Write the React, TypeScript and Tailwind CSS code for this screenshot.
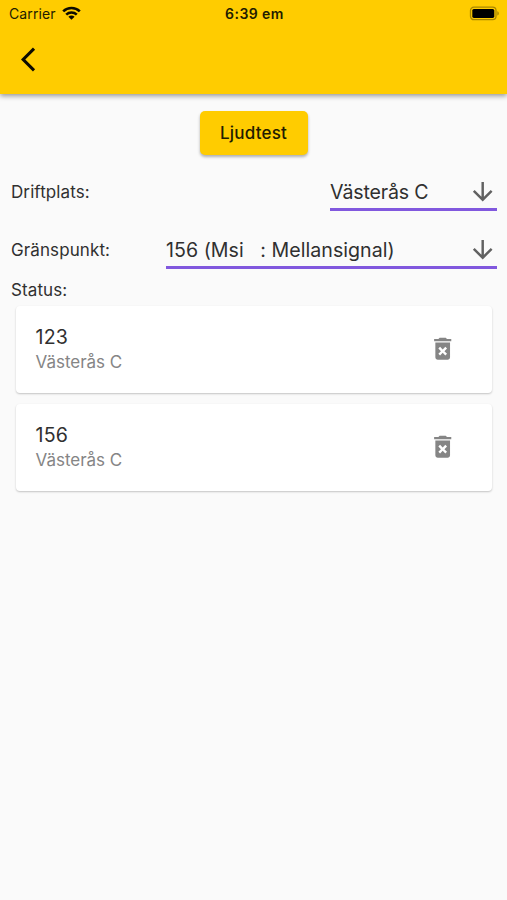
import React from 'react';
import { MdArrowDownward, MdDeleteForever } from 'react-icons/md';

type SelectType = {
  label: string;
  value: string;
  className: string;
};

const StatusBar = () => {
  return (
    <div className="grid grid-cols-3 items-center h-[27px] pl-[9px] pr-[7px] text-[14px] text-[#221c00]">
      <div className="flex items-center gap-[6px]">
        <span className="tracking-[0.1px]">Carrier</span>
        <svg
          className="-mt-[2px]"
          width="19"
          height="14"
          viewBox="0 0 19 14"
          fill="none"
        >
          <path
            d="M1.2 5.4C5.8 .9 13.2 .9 17.8 5.4M4.2 8.6c3-2.8 7.6-2.8 10.6 0"
            stroke="#0d0b00"
            strokeWidth="2.6"
          />
          <path d="M9.5 13.8L6.4 10.8c1.8-1.6 4.4-1.6 6.2 0z" fill="#0d0b00" />
        </svg>
      </div>
      <span className="text-center font-semibold tracking-[0.45px]">
        6:39 em
      </span>
      <svg
        className="justify-self-end"
        width="31"
        height="15"
        viewBox="0 0 31 15"
      >
        <rect
          x="1.5"
          y="1.1"
          width="25.5"
          height="12.6"
          rx="3.4"
          fill="none"
          stroke="#a98700"
          strokeWidth="1.3"
        />
        <rect x="3.3" y="2.9" width="22" height="9" rx="1.6" fill="#000" />
        <path d="M28.3 5.2c2 .6 2 3.8 0 4.4z" fill="#a98700" />
      </svg>
    </div>
  );
};

const Select = ({ label, value, className }: SelectType) => {
  return (
    <div className="flex items-center justify-between h-[58.6px] pl-[11px] pr-[10px]">
      <span className="pt-[2px] text-[17px] tracking-[0.1px]">{label}</span>
      <button
        className={`flex items-center justify-between h-[39px] pt-[3px] border-b-[3px] border-[#8158de] text-[19.6px] ${className}`}
      >
        <span className="pt-[2px] whitespace-pre">{value}</span>
        <MdArrowDownward className="size-[29.4px] text-[#616161]" />
      </button>
    </div>
  );
};

const Card = ({ title, place }: { title: string; place: string }) => {
  return (
    <li className="flex items-center justify-between h-[87px] pl-[20px] pr-[34px] rounded-[4px] bg-white shadow-[0_1px_2px_rgba(0,0,0,0.22)]">
      <div>
        <h2 className="text-[19.6px] leading-[26px] tracking-[0.2px]">
          {title}
        </h2>
        <p className="text-[17px] leading-[25px] tracking-[-0.05px] text-[#858585]">
          {place}
        </p>
      </div>
      <MdDeleteForever className="size-[29.4px] -mt-[2px] text-[#858585]" />
    </li>
  );
};

const App = () => {
  return (
    <div className="min-h-screen bg-[#fafafa] text-[#303030] font-[Inter,sans-serif]">
      <header className="h-[94px] bg-[#ffcc00] shadow-[0_2px_5px_rgba(0,0,0,0.4)]">
        <StatusBar />
        <button className="block pl-[20.5px] pt-[18px]">
          <svg width="29" height="29" viewBox="0 0 24 24" fill="#0d0b00">
            <path d="M11.67 3.87L9.9 2.1 0 12l9.9 9.9 1.77-1.77L3.54 12z" />
          </svg>
        </button>
      </header>
      <main>
        <div className="flex justify-center pt-[17px] pb-[7px]">
          <button className="w-[108px] h-[44px] pt-[1px] rounded-[5px] bg-[#ffcc00] text-[17px] font-medium tracking-[0.2px] text-[#221c00] shadow-[0_2px_3px_rgba(0,0,0,0.3)]">
            Ljudtest
          </button>
        </div>
        <Select
          label="Driftplats:"
          value="Västerås C"
          className="w-[167px] tracking-[-0.2px]"
        />
        <Select
          label="Gränspunkt:"
          value="156 (Msi   : Mellansignal)"
          className="w-[331px] tracking-[0.03px]"
        />
        <p className="pl-[11px] text-[17px] leading-[22px] tracking-[0.1px]">
          Status:
        </p>
        <ul className="flex flex-col gap-[11px] px-[15.5px] pt-[5px]">
          <Card title="123" place="Västerås C" />
          <Card title="156" place="Västerås C" />
        </ul>
      </main>
    </div>
  );
};

export default App;
